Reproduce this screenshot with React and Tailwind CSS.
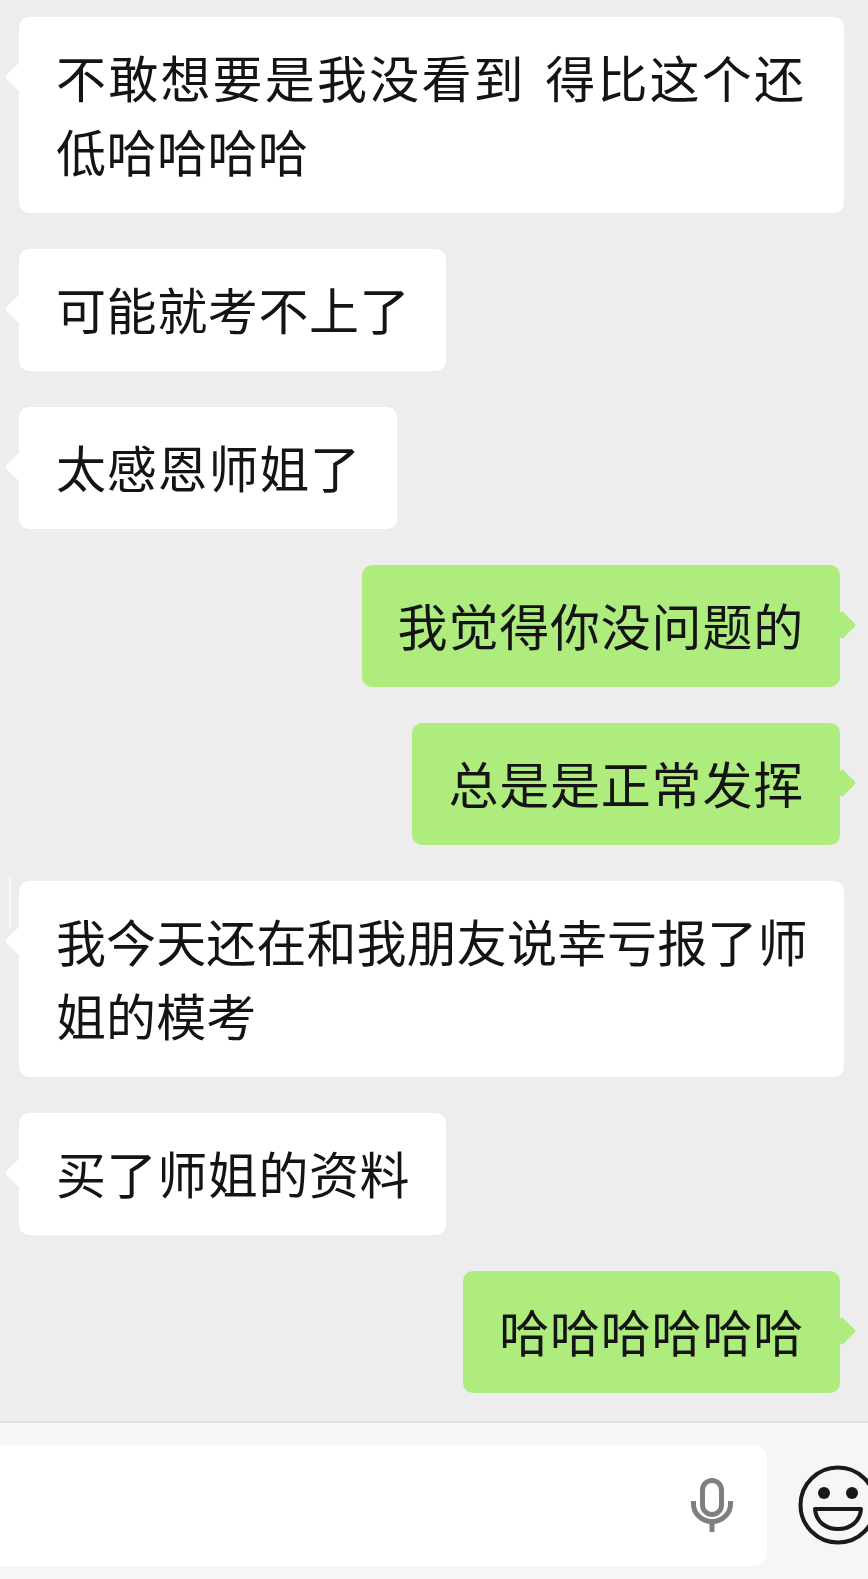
// Chat thread with the composer pinned at the bottom
const messages = [
  { side: 'left', lines: ['不敢想要是我没看到 得比这个还', '低哈哈哈哈'], spacing: ['tracking-[2.2px] [word-spacing:6px]', 'tracking-[0.5px]'] },
  { side: 'left', lines: ['可能就考不上了'], spacing: ['tracking-[0.6px]'] },
  { side: 'left', lines: ['太感恩师姐了'], spacing: ['tracking-[0.8px]'] },
  { side: 'right', lines: ['我觉得你没问题的'], spacing: ['tracking-[0.8px]'] },
  { side: 'right', lines: ['总是是正常发挥'], spacing: ['tracking-[0.8px]'] },
  { side: 'left', lines: ['我今天还在和我朋友说幸亏报了师', '姐的模考'], spacing: ['tracking-[0.1px]', 'tracking-[0.1px]'], seam: true },
  { side: 'left', lines: ['买了师姐的资料'], spacing: ['tracking-[0.6px]'] },
  { side: 'right', lines: ['哈哈哈哈哈哈'], spacing: ['tracking-[0.8px]'] },
];

const Bubble = ({ side, lines, spacing, seam }) => {
  const isLeft = side === 'left';
  return (
    <div className={isLeft ? 'flex justify-start pl-[19px]' : 'flex justify-end pr-[28px]'}>
      <div
        className={
          isLeft
            ? 'relative rounded-[10px] bg-white pb-[26px] pl-[37px] pr-[36px] pt-[22px] ' + (lines.length > 1 ? 'w-[825px]' : 'w-auto')
            : 'relative rounded-[10px] bg-[#aeec7e] pb-[26px] pl-[36px] pr-[36px] pt-[22px]'
        }
      >
        {seam && <span className="absolute left-[-10px] top-[-4px] h-[50px] w-[2px] bg-white/70" />}
        <span
          className={
            isLeft
              ? 'absolute left-[-10px] top-[50px] h-[20px] w-[20px] rotate-45 rounded-[2px] bg-white'
              : 'absolute right-[-12px] top-[50px] h-[20px] w-[20px] rotate-45 rounded-[2px] bg-[#aeec7e]'
          }
        />
        <p className="relative whitespace-pre text-[50px] leading-[74px] text-[#141414]">
          {lines.map((line, i) => (
            <span key={i} className={'block ' + spacing[i]}>
              {line}
            </span>
          ))}
        </p>
      </div>
    </div>
  );
};

const MicIcon = () => (
  <svg width="42" height="54" viewBox="0 0 42 54" fill="none" stroke="#7f7f7f" strokeWidth="5">
    <rect x="11.5" y="2.5" width="19" height="34" rx="9.5" />
    <path d="M2.5 23 v3 a18.500 17.500 0 0 0 37 0 v-3" />
    <path d="M21 43 v11" />
  </svg>
);

const SmileIcon = () => (
  <svg width="80" height="80" viewBox="0 0 80 80" fill="none" className="shrink-0">
    <circle cx="40" cy="40" r="37.500" stroke="#1a1a1a" strokeWidth="4" />
    <circle cx="26" cy="28" r="6" fill="#1a1a1a" />
    <circle cx="54" cy="28" r="6" fill="#1a1a1a" />
    <path d="M17 44 H63 C62 57 52 64 40 64 C28 64 18 57 17 44 Z" stroke="#1a1a1a" strokeWidth="4" strokeLinejoin="round" />
  </svg>
);

export default function App() {
  return (
    <div
      className="flex h-[1579px] w-[868px] flex-col overflow-hidden bg-[#ededed]"
      style={{ fontFamily: '"Noto Sans CJK SC", "Noto Sans", sans-serif' }}
    >
      <div className="flex flex-1 flex-col gap-[36px] pt-[17px]">
        {messages.map((m, i) => (
          <Bubble key={i} {...m} />
        ))}
      </div>
      <div className="flex h-[158px] items-start border-t-2 border-[#e0e0e0] bg-[#f6f6f6] pt-[22px]">
        <div className="flex h-[121px] w-[767px] shrink-0 items-center justify-end rounded-r-[14px] bg-white pb-[2px] pr-[34px]">
          <MicIcon />
        </div>
        <div className="ml-[31px] mt-[20px]">
          <SmileIcon />
        </div>
      </div>
    </div>
  );
}
